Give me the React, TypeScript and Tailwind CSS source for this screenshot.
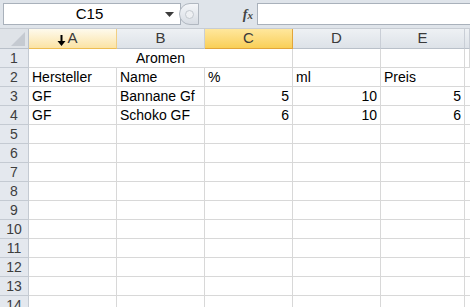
import React from 'react';

const cols = ['A', 'B', 'C', 'D', 'E', ''];
const widths = ['w-[88px]', 'w-[88px]', 'w-[88px]', 'w-[88px]', 'w-[84px]', 'flex-1'];

type Cell = { text: string; right?: boolean };

const data: Record<number, Cell[]> = {
  2: [{ text: 'Hersteller' }, { text: 'Name' }, { text: '%' }, { text: 'ml' }, { text: 'Preis' }],
  3: [{ text: 'GF' }, { text: 'Bannane Gf' }, { text: '5', right: true }, { text: '10', right: true }, { text: '5', right: true }],
  4: [{ text: 'GF' }, { text: 'Schoko GF' }, { text: '6', right: true }, { text: '10', right: true }, { text: '6', right: true }],
};

const FormulaBar = () => (
  <div className="h-[29px] bg-[#dfe4ea] flex items-start pt-[3px] border-b border-[#c7ccd3]">
    {/* Name box */}
    <div className="ml-[3px] w-[178px] h-[22px] bg-white border border-[#a9b1bb] flex items-center">
      <span className="flex-1 text-center text-[15px] text-black pl-[10px]">C15</span>
      <svg width="9" height="5" viewBox="0 0 9 5" className="mr-[6px]">
        <path d="M0 0h9L4.5 5z" fill="#3c3c3c" />
      </svg>
    </div>
    {/* splitter button */}
    <div className="-ml-[2px] w-[20px] h-[22px] rounded-l-full border border-[#b0b7c0] bg-gradient-to-b from-[#f4f6f9] to-[#d8dde4] flex items-center justify-center">
      <div className="w-[9px] h-[9px] rounded-full border border-[#c3c8cf] bg-[#eef0f3]" />
    </div>
    <div className="flex-1 h-[22px] flex items-center">
      <span className="w-[58px] text-right pr-[4px] text-[14px] italic font-bold text-[#444]" style={{ fontFamily: '"Liberation Serif", serif' }}>
        f<span className="text-[11px]">x</span>
      </span>
      <div className="flex-1 h-[22px] bg-white border border-[#a9b1bb] border-r-0" />
    </div>
  </div>
);

const DownArrow = () => (
  <svg width="9" height="11" viewBox="0 0 9 11" className="absolute left-[28px] top-[6px]">
    <path d="M3.5 0h2v6h3L4.5 11 0.5 6h3z" fill="#000" />
  </svg>
);

export default function App() {
  const rows = Array.from({ length: 14 }, (_, i) => i + 1);
  return (
    <div className="w-[470px] h-[307px] overflow-hidden bg-white text-[14px] text-black" style={{ fontFamily: '"Liberation Sans", Arial, sans-serif' }}>
      <FormulaBar />
      {/* Column headers */}
      <div className="flex h-[20px]">
        <div className="w-[29px] shrink-0 bg-[#dfe3e8] border-r border-b border-[#b9c0c9] relative">
          <svg width="14" height="14" viewBox="0 0 14 14" className="absolute right-[3px] bottom-[2px]">
            <path d="M14 0v14H0z" fill="#c5cad1" />
          </svg>
        </div>
        {cols.map((c, i) => {
          const sel = c === 'C';
          const hov = c === 'A';
          const bg = sel
            ? 'bg-gradient-to-b from-[#ffe79c] to-[#f9cf56] border-b-[#e2a53a] border-r-[#e2a53a]'
            : hov
              ? 'bg-gradient-to-b from-[#fefaed] to-[#fbe3a4] border-b-[#edbd53] border-r-[#f1cf83]'
              : 'bg-gradient-to-b from-[#eef1f4] to-[#dde2e8] border-b-[#b9c0c9] border-r-[#c9ced6]';
          return (
            <div key={i} className={`${widths[i]} shrink-0 relative border-r border-b ${bg} flex items-center justify-center text-[15px] text-[#3a3a3a]`}>
              {c}
              {hov && <DownArrow />}
            </div>
          );
        })}
      </div>
      {/* Rows */}
      {rows.map((r) => (
        <div key={r} className="flex h-[19px]">
          <div className="w-[29px] shrink-0 bg-[#e4e8ee] border-r border-b border-[#c4cad2] flex items-center justify-center text-[14px] text-[#3d3d3d]">
            {r}
          </div>
          {r === 1 ? (
            <>
              <div className="w-[264px] shrink-0 border-r border-b border-[#d8d8d8] flex items-center justify-center leading-none">
                Aromen
              </div>
              {widths.slice(3).map((w, j) => (
                <div key={j} className={`${w} shrink-0 border-r border-b border-[#d8d8d8]`} />
              ))}
            </>
          ) : (
            widths.map((w, j) => {
              const cell = data[r]?.[j];
              return (
                <div
                  key={j}
                  className={`${w} shrink-0 border-r border-b border-[#d8d8d8] flex items-center leading-none px-[3px] ${cell?.right ? 'justify-end' : 'justify-start'}`}
                >
                  {cell?.text}
                </div>
              );
            })
          )}
        </div>
      ))}
    </div>
  );
}
